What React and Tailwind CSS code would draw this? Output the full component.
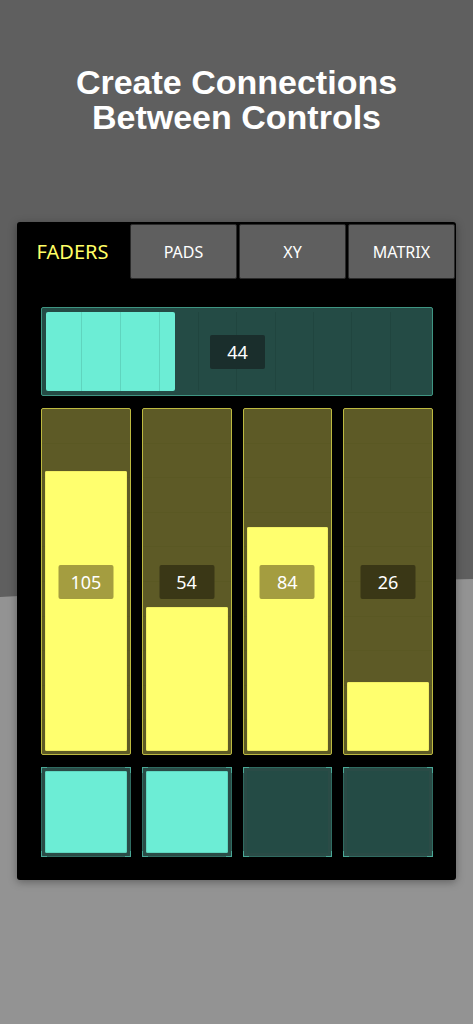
import React from "react";

const tabs = ["FADERS", "PADS", "XY", "MATRIX"];
const faders = [105, 54, 84, 26];
const pads = [true, true, false, false];
const ticks = Array.from({ length: 10 });

const Fader = ({ value }) => {
  const pct = (value / 127) * 100;
  // label sits on the fill or on the track, colour changes
  const onFill = pct > 50;
  return (
    <div className="relative h-[347px] rounded-[2px] border border-[#bdb940] bg-[#5d5a26] p-[3px]">
      <div className="absolute inset-0 flex flex-col">
        {ticks.map((_, i) => (
          <div key={i} className="flex-1 border-b border-[#58551f]/50 last:border-b-0" />
        ))}
      </div>
      <div className="relative flex h-full flex-col justify-end">
        <div
          className="rounded-[2px] bg-[#ffff6e] shadow-[inset_0_0_0_1px_#f3f064]"
          style={{ height: `${pct}%` }}
        />
      </div>
      <div className="absolute left-1/2 top-[156px] flex h-[34px] w-[55px] -translate-x-1/2 items-center justify-center">
        <div
          className={`flex h-full w-full items-center justify-center rounded-[2px] text-[18px] text-white ${
            onFill ? "bg-[#a49d40]" : "bg-[#3a3716]"
          }`}
        >
          {value}
        </div>
      </div>
    </div>
  );
};

const Pad = ({ on }) => (
  <div className="relative h-[90px] rounded-[2px] border border-[#2f6a60] bg-[#2a4b46] p-[3px]">
    <span className="absolute left-[-1px] top-[-1px] h-[6px] w-[6px] border-l border-t border-[#4aa897]" />
    <span className="absolute right-[-1px] top-[-1px] h-[6px] w-[6px] border-r border-t border-[#4aa897]" />
    <span className="absolute bottom-[-1px] left-[-1px] h-[6px] w-[6px] border-b border-l border-[#4aa897]" />
    <span className="absolute bottom-[-1px] right-[-1px] h-[6px] w-[6px] border-b border-r border-[#4aa897]" />
    {on ? (
      <div className="h-full w-full rounded-[2px] bg-[#6cedd5] shadow-[inset_0_0_0_1px_#5fd8c1]" />
    ) : (
      <div className="h-full w-full bg-[#244b45]" />
    )}
  </div>
);

export default function App() {
  const hval = 44;
  return (
    <div
      className="relative h-[1024px] w-full overflow-hidden bg-[#5f5f5f]"
      style={{ fontFamily: '"Noto Sans", "Open Sans", sans-serif' }}
    >
      {/* lighter backdrop curve */}
      <svg className="absolute inset-0 h-full w-full" viewBox="0 0 473 1024" preserveAspectRatio="none">
        <path d="M0 597 Q 236 583 473 579 L473 1024 L0 1024 Z" fill="#939393" />
      </svg>

      <div className="relative flex flex-col items-center">
        <h1
          className="mt-[65px] text-center text-[34px] font-bold leading-[35px] text-white"
          style={{ fontFamily: '"Liberation Sans", Arial, sans-serif' }}
        >
          Create Connections
          <br />
          Between Controls
        </h1>

        <div className="mt-[87px] w-[439px] rounded-[3px] bg-black pb-[23px] shadow-[0_2px_8px_rgba(0,0,0,0.35)]">
          <div className="flex items-stretch gap-[2px] pr-[1px] pt-[2px]">
            {tabs.map((t, i) =>
              i === 0 ? (
                <div key={t} className="flex h-[55px] w-[111px] items-center justify-center text-[20px] text-[#ffff66]">
                  {t}
                </div>
              ) : (
                <div
                  key={t}
                  className="flex h-[55px] flex-1 items-center justify-center rounded-[2px] border border-[#2a2a2a] bg-[#5f5f5f] text-[16px] text-white"
                >
                  {t}
                </div>
              )
            )}
          </div>

          <div className="pl-[24px] pr-[23px] pt-[28px]">
            {/* horizontal fader */}
            <div className="relative h-[89px] rounded-[2px] border border-[#3f9582] bg-[#244b45] p-[4px]">
              <div className="absolute inset-[4px] flex">
                {ticks.map((_, i) => (
                  <div key={i} className="flex-1 border-r border-[#20453f] last:border-r-0" />
                ))}
              </div>
              <div className="relative h-full">
                <div className="relative h-full rounded-[2px] bg-[#6cedd5]" style={{ width: `${(hval / 127) * 100 - 1}%` }}>
                  <div className="absolute inset-0 flex">
                    <div className="w-[36px] border-r border-[#5fd4be]" />
                    <div className="w-[39px] border-r border-[#5fd4be]" />
                    <div className="w-[39px] border-r border-[#5fd4be]" />
                  </div>
                </div>
              </div>
              <div className="absolute left-[168px] top-[27px] flex h-[34px] w-[55px] items-center justify-center rounded-[2px] bg-[#1a2e2c] text-[18px] text-white">
                {hval}
              </div>
            </div>

            <div className="mt-[12px] grid grid-cols-4 gap-[11px]">
              {faders.map((v, i) => (
                <Fader key={i} value={v} />
              ))}
            </div>

            <div className="mt-[12px] grid grid-cols-4 gap-[11px]">
              {pads.map((p, i) => (
                <Pad key={i} on={p} />
              ))}
            </div>
          </div>
        </div>
      </div>
    </div>
  );
}
